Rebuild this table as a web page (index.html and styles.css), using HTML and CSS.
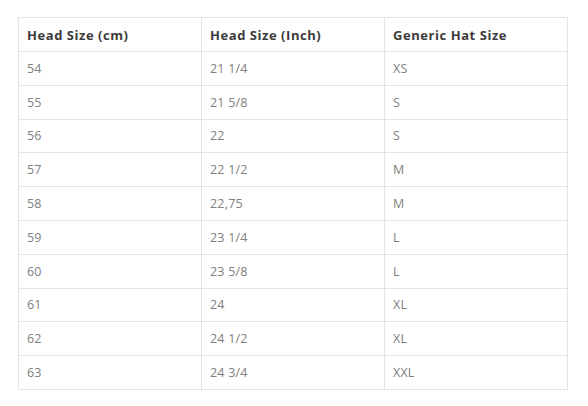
FILE: index.html
```
<!DOCTYPE html>
<html>
<head>
<meta charset="utf-8">
<link rel="stylesheet" href="styles.css">
</head>
<body>
<table class="size-table">
<thead>
<tr><th>Head Size (cm)</th><th>Head Size (Inch)</th><th>Generic Hat Size</th></tr>
</thead>
<tbody>
<tr><td>54</td><td>21 1/4</td><td>XS</td></tr>
<tr><td>55</td><td>21 5/8</td><td>S</td></tr>
<tr><td>56</td><td>22</td><td>S</td></tr>
<tr><td>57</td><td>22 1/2</td><td>M</td></tr>
<tr><td>58</td><td>22,75</td><td>M</td></tr>
<tr><td>59</td><td>23 1/4</td><td>L</td></tr>
<tr><td>60</td><td>23 5/8</td><td>L</td></tr>
<tr><td>61</td><td>24</td><td>XL</td></tr>
<tr><td>62</td><td>24 1/2</td><td>XL</td></tr>
<tr><td>63</td><td>24 3/4</td><td>XXL</td></tr>
</tbody>
</table>
</body>
</html>
```
FILE: styles.css
```
html, body {
  margin: 0;
  padding: 0;
  background: #ffffff;
}
body {
  padding: 17px 0 0 18px;
  font-family: "Open Sans", "DejaVu Sans", sans-serif;
}
.size-table {
  border-collapse: collapse;
  table-layout: fixed;
  width: 550px;
}
.size-table th,
.size-table td {
  border: 1px solid #e6e4df;
  padding: 0 8px;
  text-align: left;
  vertical-align: middle;
}
.size-table th {
  height: 33px;
  font-size: 13px;
  font-weight: 700;
  letter-spacing: 0.55px;
  color: #3c3c3c;
}
.size-table td {
  height: 32.8px;
  font-size: 12.5px;
  font-weight: 400;
  letter-spacing: 0.2px;
  color: #808080;
}
```
